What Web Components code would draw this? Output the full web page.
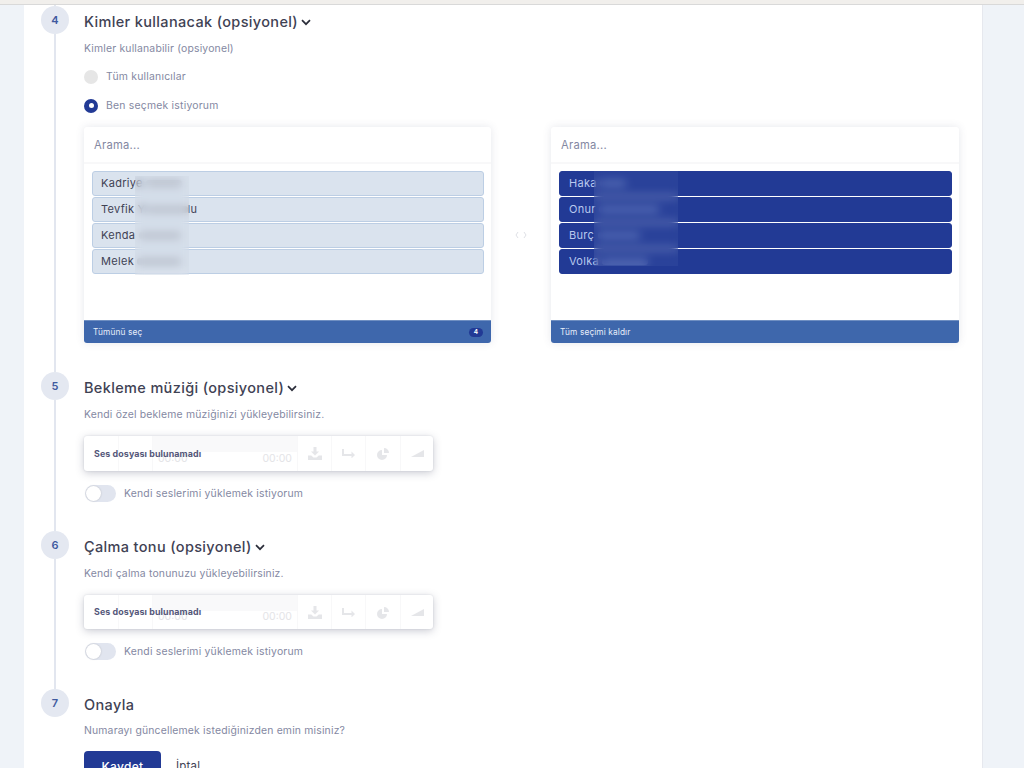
<!DOCTYPE html>
<html lang="tr">
<head>
<meta charset="utf-8">
<title>Adımlar</title>
<style>
html,body{margin:0;padding:0;height:768px;overflow:hidden;background:#eff3f8;font-family:Inter,"Noto Sans",sans-serif;color:#3f4254}
</style>
</head>
<body>
<app-page>
  <form-step num="4" title-text="Kimler kullanacak (opsiyonel)" chevron sub="Kimler kullanabilir (opsiyonel)" style="--step-h:367px">
    <radio-option label="Tüm kullanıcılar"></radio-option>
    <radio-option label="Ben seçmek istiyorum" checked></radio-option>
    <dual-list></dual-list>
  </form-step>
  <form-step num="5" title-text="Bekleme müziği (opsiyonel)" chevron sub="Kendi özel bekleme müziğinizi yükleyebilirsiniz." style="--step-h:159px">
    <audio-box></audio-box>
    <toggle-row label="Kendi seslerimi yüklemek istiyorum"></toggle-row>
  </form-step>
  <form-step num="6" title-text="Çalma tonu (opsiyonel)" chevron sub="Kendi çalma tonunuzu yükleyebilirsiniz." style="--step-h:158px">
    <audio-box style="height:34px"></audio-box>
    <toggle-row label="Kendi seslerimi yüklemek istiyorum"></toggle-row>
  </form-step>
  <form-step num="7" title-text="Onayla" last sub="Numarayı güncellemek istediğinizden emin misiniz?" style="--step-h:80px;--sub-gap:9px">
    <form-actions></form-actions>
  </form-step>
</app-page>

<script>
function shadow(el, html){ const r = el.attachShadow({mode:'open'}); r.innerHTML = html; return r; }

customElements.define('app-page', class extends HTMLElement{
  constructor(){ super(); shadow(this, `<style>
    :host{display:block;height:768px;overflow:hidden}
    .top{height:4px;background:#f1efec;border-bottom:1px solid #d9d9d9}
    .panel{margin-left:24px;width:958px;background:#fff;border-right:1px solid #e6e8ee;height:763px;overflow:hidden;filter:blur(.35px)}
  </style><div class="top"></div><div class="panel"><slot></slot></div>`); }
});

customElements.define('form-step', class extends HTMLElement{
  constructor(){ super();
    const t=this.getAttribute('title-text'), s=this.getAttribute('sub'), n=this.getAttribute('num');
    const chev=this.hasAttribute('chevron')?`<svg width="10" height="7" viewBox="0 0 10 7"><path d="M1 1.2 5 5.2 9 1.2" fill="none" stroke="#2b2d3a" stroke-width="1.7"/></svg>`:'';
    shadow(this, `<style>
    :host{display:flex;height:var(--step-h);padding-left:17px}
    .rail{width:28px;display:flex;flex-direction:column;align-items:center;flex:none}
    .stub{width:2px;height:${n==='4'?'1px':'0'};background:#e2e6ef}
    .circle{width:28px;height:28px;border-radius:50%;background:#e4e8f1;color:#3f5a9f;font-size:11px;font-weight:600;display:flex;align-items:center;justify-content:center;flex:none}
    .line{width:2px;flex:1;background:#e2e6ef}
    .body{margin-left:15px;flex:1;min-width:0;padding-top:${n==='4'?'7':'6'}px}
    .title{display:flex;align-items:center;gap:3px;font-size:14.5px;font-weight:450;letter-spacing:.35px;line-height:20px;color:#3f4254}
    .sub{font-size:10.4px;letter-spacing:.18px;color:#8488a2;line-height:14px;margin-top:var(--sub-gap,10px)}
  </style>
  <div class="rail"><div class="stub"></div><div class="circle">${n}</div>${this.hasAttribute('last')?'':'<div class="line"></div>'}</div>
  <div class="body"><div class="title">${t}${chev}</div><div class="sub">${s}</div><slot></slot></div>`); }
});

customElements.define('radio-option', class extends HTMLElement{
  constructor(){ super();
    const c=this.hasAttribute('checked');
    shadow(this, `<style>
    :host{display:flex;align-items:center;gap:8px;height:29px;font-size:10.4px;letter-spacing:.22px;color:#8488a2}
    :host(:first-of-type){margin-top:6px}
    .r{width:14px;height:14px;border-radius:50%;background:${c?'#223a95':'#e6e6e6'};display:flex;align-items:center;justify-content:center}
    .r i{width:5px;height:5px;border-radius:50%;background:#fff;display:${c?'block':'none'}}
  </style><span class="r"><i></i></span><span>${this.getAttribute('label')}</span>`); }
});

customElements.define('list-row', class extends HTMLElement{
  constructor(){ super();
    shadow(this, `<style>
    :host{display:flex;align-items:center;box-sizing:border-box;height:25px;padding:0 0 1px var(--row-pad,8px);border:1px solid var(--row-border);border-radius:3px;background:var(--row-bg);color:var(--row-fg);font-size:11px;letter-spacing:.3px;white-space:pre}
    ::slotted(i){display:inline-block;height:7px;border-radius:3px;background:var(--row-fg);opacity:var(--bar,.22)}
  </style><slot></slot>`); }
});

customElements.define('list-card', class extends HTMLElement{
  constructor(){ super();
    const badge=this.getAttribute('badge');
    shadow(this, `<style>
    :host{display:flex;flex-direction:column;height:216px;background:#fff;border-radius:3px;box-shadow:0 0 8px rgba(60,70,110,.13);position:relative;overflow:hidden}
    .search{height:37px;box-sizing:border-box;display:flex;align-items:center;padding-left:10px;font-size:11.2px;letter-spacing:.25px;color:#8488a2;border-bottom:2px solid #f8f8f9;flex:none}
    .list{flex:1;padding:7px 7px 0 8px;display:flex;flex-direction:column;gap:1px}
    .foot{height:23px;background:#3e67ac;border-top:1px solid #6f8fc2;box-sizing:border-box;color:#e8eefa;font-size:8.3px;letter-spacing:.12px;display:flex;align-items:center;justify-content:space-between;padding:0 8px 0 9px;flex:none}
    .badge{background:#223a95;color:#fff;font-size:6.5px;font-weight:600;width:14px;height:9px;border-radius:5px;display:flex;align-items:center;justify-content:center}
    .veil{position:absolute;backdrop-filter:blur(4px);-webkit-backdrop-filter:blur(4px);background:var(--veil,rgba(190,198,215,.14))}
  </style>
  <div class="search">Arama...</div>
  <div class="list"><slot></slot></div>
  <div class="foot"><span>${this.getAttribute('foot')}</span>${badge?`<span class="badge">${badge}</span>`:''}</div>
  <div class="veil" style="${this.getAttribute('veil')}"></div>`); }
});

customElements.define('dual-list', class extends HTMLElement{
  constructor(){ super();
    const bar=w=>`<i style="width:${w}px"></i>`;
    shadow(this, `<style>
    :host{display:grid;grid-template-columns:407px 60px 408px;margin-top:7px}
    .mid{display:flex;align-items:center;justify-content:center;color:#dfe1e6}
    list-card.a{--row-bg:#dae3ee;--row-border:#bccee4;--row-fg:#3f4254}
    list-card.b{--row-bg:#223a95;--row-border:#223a95;--row-fg:#b9c9ee;--row-pad:9px;--bar:.3;--veil:rgba(110,130,195,.12)}
  </style>
  <list-card class="a" foot="Tümünü seç" badge="4" veil="left:51px;top:49px;width:54px;height:99px">
    <list-row>Kadriye ${bar(36)}</list-row>
    <list-row>Tevfik Y${bar(42)}lu</list-row>
    <list-row>Kenda ${bar(42)}</list-row>
    <list-row>Melek ${bar(44)}</list-row>
  </list-card>
  <div class="mid"><svg width="12" height="8" viewBox="0 0 12 8"><path d="M3 1 1 4l2 3M9 1l2 3-2 3" fill="none" stroke="currentColor" stroke-width="1"/></svg></div>
  <list-card class="b" foot="Tüm seçimi kaldır" veil="left:43px;top:44px;width:84px;height:95px">
    <list-row>Haka ${bar(26)}</list-row>
    <list-row>Onur ${bar(60)}</list-row>
    <list-row>Burç ${bar(42)}</list-row>
    <list-row>Volka ${bar(46)}</list-row>
  </list-card>`); }
});

customElements.define('audio-box', class extends HTMLElement{
  constructor(){ super();
    const ic='fill="#6d7080"';
    shadow(this, `<style>
    :host{display:block;position:relative;width:349px;height:35px;margin-top:14px;background:#fff;border-radius:3px;box-shadow:0 2px 8px rgba(50,55,85,.26),0 0 2px rgba(50,55,85,.14);overflow:hidden}
    .p{display:flex;height:100%;color:#333;font-size:10.5px}
    .c{border-right:1px solid #f8f8f9;display:flex;align-items:center;justify-content:center;flex:none}
    .c svg,.v svg{opacity:.17}
    .wave{background:linear-gradient(#f9f9fa 0 16px,transparent 16px);width:145px;display:flex;justify-content:space-between;align-items:flex-end;padding:0 5px 6px;box-sizing:border-box;flex:none;border-right:1px solid #f8f8f9;color:#e4e4e7}
    .v{flex:1;display:flex;align-items:center;justify-content:center}
    .msg{position:absolute;left:10px;top:0;bottom:1px;display:flex;align-items:center;font-size:8.9px;font-weight:700;color:#55587a;letter-spacing:.1px}
    svg{display:block}
  </style>
  <div class="p">
    <div class="c" style="width:34px"></div><div class="c" style="width:33px"></div>
    <div class="wave"><span>00:00</span><span>00:00</span></div>
    <div class="c" style="width:33px"><svg width="14" height="13" viewBox="0 0 14 13"><path ${ic} d="M5.500 0h3v4.500H11L7 8.500 3 4.500h2.500zM0 8.500h3.200L5.500 10.500h3l2.300-2H14V13H0z"/></svg></div>
    <div class="c" style="width:33px"><svg width="13" height="9" viewBox="0 0 13 9"><path ${ic} d="M0 0h2v5h7.500V2.600L13 6 9.500 9.400V7H0z"/></svg></div>
    <div class="c" style="width:34px"><svg width="13" height="13" viewBox="0 0 13 13"><path ${ic} d="M5 3a5 5 0 1 0 5 5H5zM7 1a5 5 0 0 1 5 5H7z"/></svg></div>
    <div class="v"><svg width="13" height="7" viewBox="0 0 13 7"><path ${ic} d="M0 7 13 0v7z"/></svg></div>
  </div>
  <div class="msg">Ses dosyası bulunamadı</div>`); }
});

customElements.define('toggle-row', class extends HTMLElement{
  constructor(){ super();
    shadow(this, `<style>
    :host{display:flex;align-items:center;height:17px;margin-top:14px;font-size:10.4px;letter-spacing:.2px;color:#8488a2}
    .t{width:31px;height:17px;border-radius:9px;background:#e1e5ef;position:relative;margin-left:1px;margin-right:8px;flex:none}
    .t::after{content:"";position:absolute;left:1px;top:1px;width:15px;height:15px;border-radius:50%;background:#fff;box-shadow:0 0 2px rgba(0,0,0,.2)}
  </style><span class="t"></span><span>${this.getAttribute('label')}</span>`); }
});

customElements.define('form-actions', class extends HTMLElement{
  constructor(){ super();
    shadow(this, `<style>
    :host{display:flex;align-items:center;margin-top:13px;font-size:11.500px;letter-spacing:.2px}
    .b{width:77px;height:30px;background:#223a95;color:#fff;border-radius:4px;display:flex;align-items:center;justify-content:center;font-weight:500;font-size:12px;letter-spacing:.3px}
    .c{margin-left:15px;color:#3f4254}
  </style><span class="b">Kaydet</span><span class="c">İptal</span>`); }
});
</script>
</body>
</html>
